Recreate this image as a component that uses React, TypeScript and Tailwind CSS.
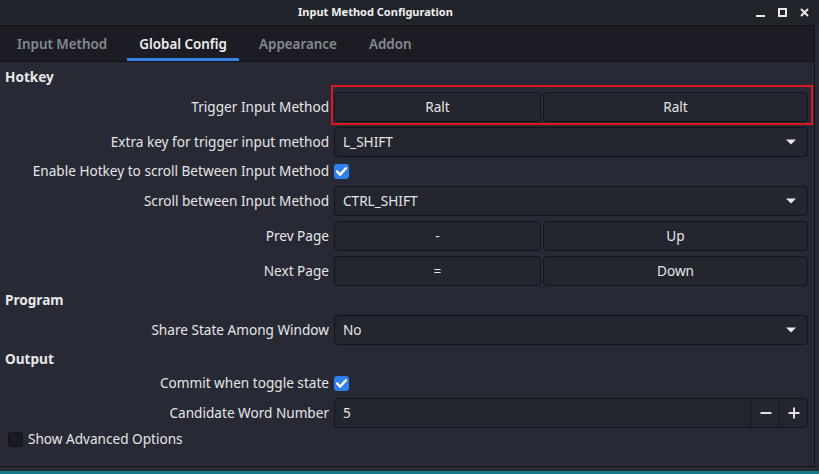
import React from 'react';

const font = { fontFamily: '"Noto Sans", "Open Sans", sans-serif' };

const Arrow: React.FC = () => (
    <svg width="10" height="6" viewBox="0 0 10 6" className="fill-[#e8e8e8]">
        <path d="M0 0.5h10L5 5.5z" />
    </svg>
);

const Check: React.FC<{ checked: boolean }> = ({ checked }) =>
    checked ? (
        <div className="w-[15px] h-[15px] rounded-[3px] bg-[#2f7fef] flex items-center justify-center">
            <svg width="11" height="9" viewBox="0 0 11 9" fill="none">
                <path d="M1.2 4.6l3 3L9.8 1.4" stroke="#fff" strokeWidth="2.4" strokeLinecap="square" />
            </svg>
        </div>
    ) : (
        <div className="w-[15px] h-[15px] rounded-[3px] bg-[#1b1c23] border border-[#121318]" />
    );

const Btn: React.FC<{ label: string; className?: string }> = ({ label, className }) => (
    <div
        className={`h-[30px] rounded-[4px] bg-[#23252f] border border-[#14151a] flex items-center justify-center text-[13.6px] text-[#e6e6e6] ${className ?? ''}`}
    >
        {label}
    </div>
);

const Combo: React.FC<{ value: string }> = ({ value }) => (
    <div className="h-[30px] rounded-[4px] bg-[#23252f] border border-[#14151a] flex items-center pl-[8px] pr-[11px] text-[13.6px] text-[#e6e6e6]">
        <span className="flex-1">{value}</span>
        <Arrow />
    </div>
);

const Row: React.FC<{ label: string; children: React.ReactNode; h?: string }> = ({ label, children, h }) => (
    <div className={`flex items-center ${h ?? 'h-[30px]'}`}>
        <div className="w-[330px] pr-[1px] text-right text-[13.6px] text-[#e6e6e6] shrink-0 whitespace-nowrap">{label}</div>
        <div className="w-[474px] ml-[4px]">{children}</div>
    </div>
);

const Header: React.FC<{ title: string }> = ({ title }) => (
    <div className="h-[19px] flex items-center pl-[5px] text-[13.6px] font-bold text-[#e8e8e8]">{title}</div>
);

const App: React.FC = () => {
    const tabs = ['Input Method', 'Global Config', 'Appearance', 'Addon'];

    return (
        <div className="w-[819px] h-[474px] bg-[#272935] flex flex-col overflow-hidden" style={font}>
            {/* title bar */}
            <div className="h-[25px] bg-[#22242c] flex items-center shrink-0">
                <div className="flex-1 text-center text-[11px] font-bold text-[#f0f0f0]">Input Method Configuration</div>
                <div className="w-[68px] flex items-center gap-[13px] pl-[5px]">
                    <svg width="9" height="9" viewBox="0 0 9 9">
                        <rect x="0" y="7" width="9" height="2" fill="#e8e8e8" />
                    </svg>
                    <svg width="9" height="9" viewBox="0 0 9 9" fill="none">
                        <rect x="1" y="1" width="7" height="7" stroke="#e8e8e8" strokeWidth="2" />
                    </svg>
                    <svg width="9" height="9" viewBox="0 0 9 9" fill="none">
                        <path d="M1 1l7 7M8 1L1 8" stroke="#e8e8e8" strokeWidth="2" />
                    </svg>
                </div>
            </div>

            {/* pane */}
            <div className="flex-1 flex flex-col w-[815px] border-r border-b border-[#121318]">
                <div className="h-[37px] bg-[#1c1d24] border-t border-b border-[#121318] flex items-stretch pl-[5px] gap-[8px] shrink-0">
                    {tabs.map((t, i) => (
                        <div
                            key={t}
                            className={`px-[12px] pt-[4px] flex items-center text-[13.4px] font-semibold border-b-[3px] ${
                                i === 1 ? 'text-[#eeeeee] border-[#3584e4]' : 'text-[#868993] border-transparent'
                            }`}
                        >
                            {t}
                        </div>
                    ))}
                </div>

                <div className="flex flex-col gap-[5px] pt-[6px]">
                    <Header title="Hotkey" />
                    <Row label="Trigger Input Method">
                        <div className="relative flex gap-[2px]">
                            <Btn label="Ralt" className="w-[207px]" />
                            <Btn label="Ralt" className="flex-1" />
                            <div className="absolute left-[-3px] right-[-5px] top-[-7px] bottom-[-3px] border-2 border-[#e0161e] pointer-events-none" />
                        </div>
                    </Row>
                    <Row label="Extra key for trigger input method">
                        <Combo value="L_SHIFT" />
                    </Row>
                    <Row label="Enable Hotkey to scroll Between Input Method" h="h-[19px]">
                        <Check checked />
                    </Row>
                    <Row label="Scroll between Input Method">
                        <Combo value="CTRL_SHIFT" />
                    </Row>
                    <Row label="Prev Page">
                        <div className="flex gap-[2px]">
                            <Btn label="-" className="w-[207px]" />
                            <Btn label="Up" className="flex-1" />
                        </div>
                    </Row>
                    <Row label="Next Page">
                        <div className="flex gap-[2px]">
                            <Btn label="=" className="w-[207px]" />
                            <Btn label="Down" className="flex-1" />
                        </div>
                    </Row>
                    <Header title="Program" />
                    <Row label="Share State Among Window">
                        <Combo value="No" />
                    </Row>
                    <Header title="Output" />
                    <Row label="Commit when toggle state" h="h-[19px]">
                        <Check checked />
                    </Row>
                    <Row label="Candidate Word Number">
                        <div className="h-[30px] rounded-[4px] bg-[#23252f] border border-[#14151a] flex items-stretch text-[13.6px] text-[#e6e6e6]">
                            <span className="flex-1 flex items-center pl-[8px]">5</span>
                            <div className="w-[28px] border-l border-[#1b1c23] flex items-center justify-center">
                                <svg width="12" height="12" viewBox="0 0 12 12">
                                    <rect x="0.5" y="5" width="11" height="2" fill="#e0e0e0" />
                                </svg>
                            </div>
                            <div className="w-[28px] border-l border-[#1b1c23] flex items-center justify-center">
                                <svg width="12" height="12" viewBox="0 0 12 12">
                                    <rect x="0.5" y="5" width="11" height="2" fill="#e0e0e0" />
                                    <rect x="5" y="0.5" width="2" height="11" fill="#e0e0e0" />
                                </svg>
                            </div>
                        </div>
                    </Row>
                    <div className="h-[15px] -mt-[1px] flex items-center gap-[5px] pl-[8px] text-[13.6px] text-[#e6e6e6]">
                        <Check checked={false} />
                        <span>Show Advanced Options</span>
                    </div>
                </div>
            </div>
            <div className="h-[4px] bg-[#272935] shrink-0" />
            <div className="h-[3px] bg-[#177a8b] shrink-0" />
        </div>
    );
};

export default App;
